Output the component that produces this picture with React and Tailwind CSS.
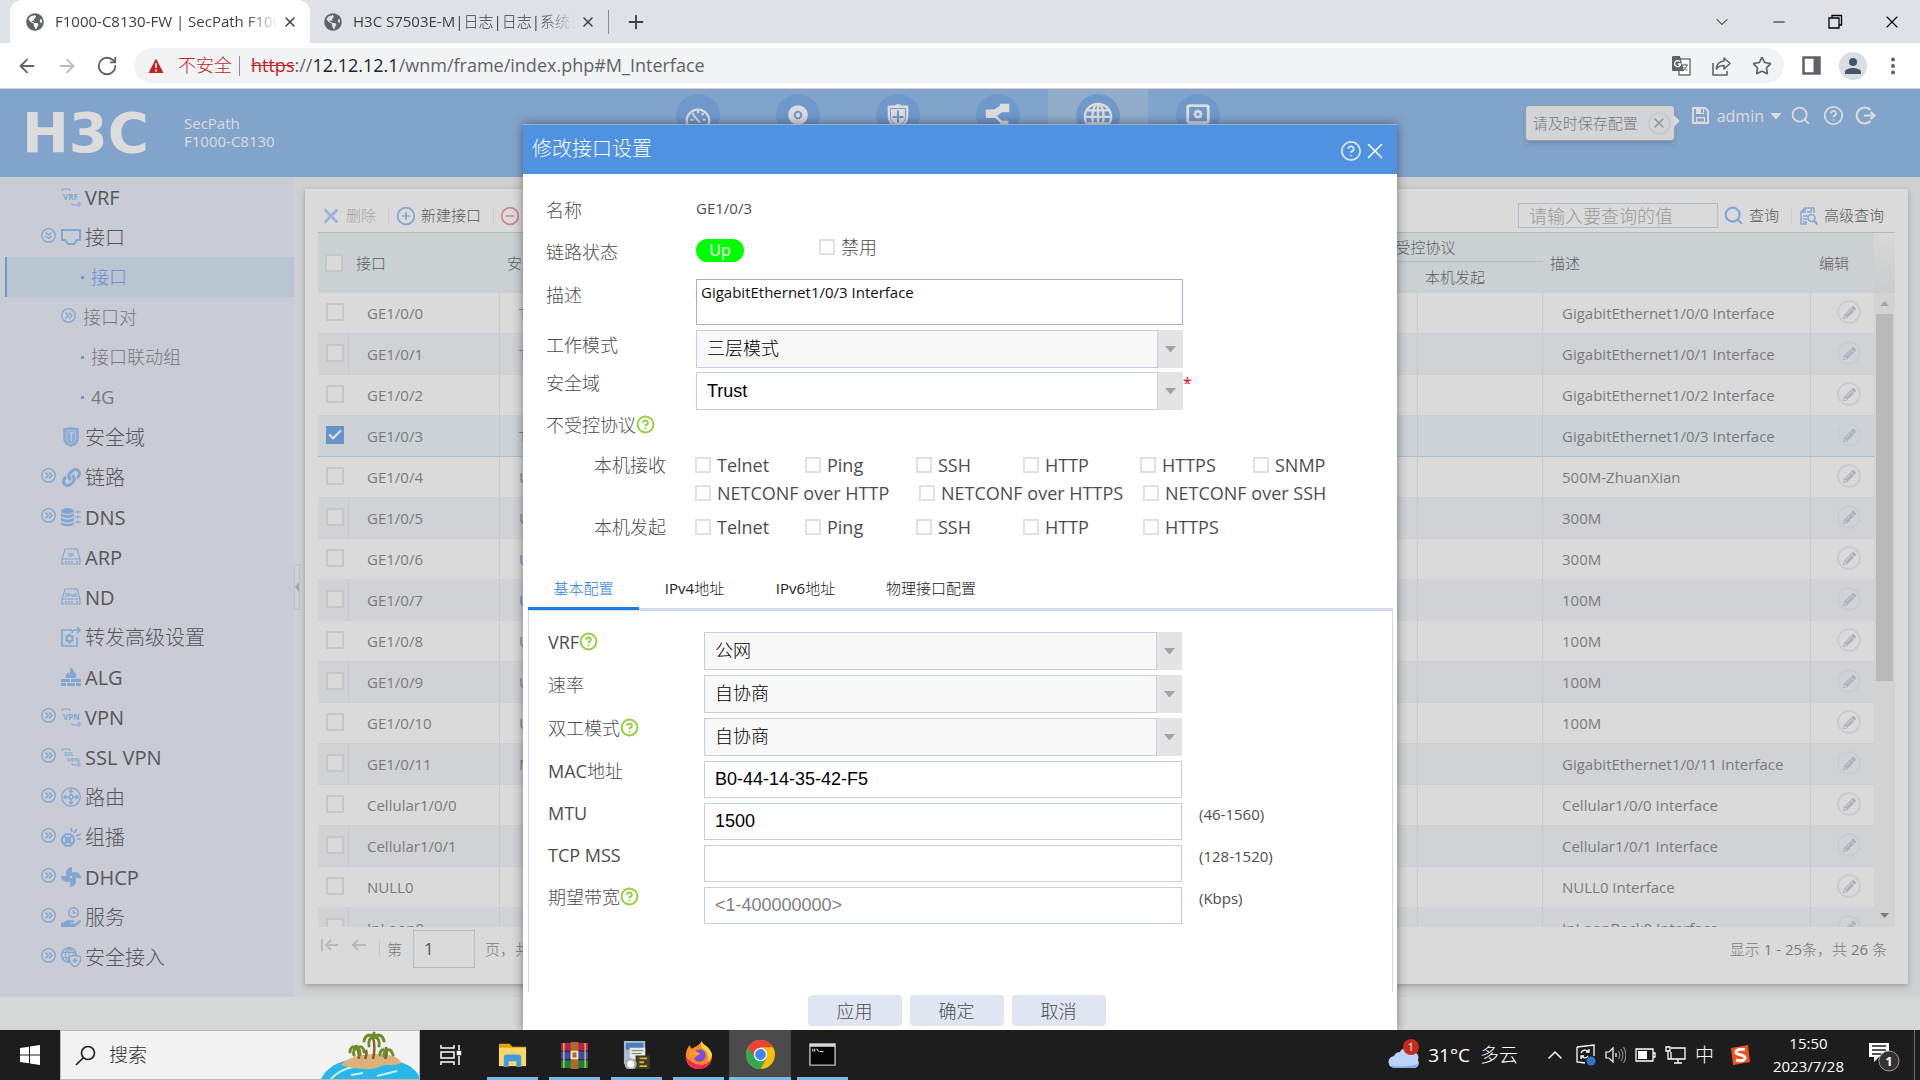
import React, { useState } from "react";
import {
  ArrowLeft,
  ArrowRight,
  Check,
  ChevronDown,
  ChevronUp,
  CircleHelp,
  CircleMinus,
  CirclePlus,
  Minus,
  Plus,
  RotateCw,
  Search,
  Star,
  X,
} from "lucide-react";
import { FaFan, FaGlobeAmericas, FaHandHolding, FaLink, FaPencilAlt } from "react-icons/fa";

const FONT = "font-['Open_Sans','Noto_Sans_CJK_SC_Light','Noto_Sans_CJK_SC',sans-serif]";

/* ---------- browser chrome ---------- */

function Tab({ title, active }) {
  return (
    <div
      className={
        active
          ? "flex h-full w-[300px] items-center rounded-t-xl bg-white pl-4 pr-3"
          : "flex h-full w-[299px] items-center border-r border-[#8a8d91] bg-transparent pl-[14px] pr-3"
      }
    >
      <FaGlobeAmericas size={18} className="shrink-0 text-[#5f6368]" />
      <span className="ml-[11px] flex-1 overflow-hidden whitespace-nowrap text-[15px] text-[#3c4043] [mask-image:linear-gradient(to_right,black_85%,transparent)]">
        {title}
      </span>
      <button type="button" aria-label="关闭标签页" className="ml-1 text-[#3c4043]">
        <X size={16} strokeWidth={2.2} />
      </button>
    </div>
  );
}

function TabStrip() {
  return (
    <div className="flex h-[43px] shrink-0 items-center bg-[#dee1e6] pl-[10px]">
      <Tab title="F1000-C8130-FW | SecPath F1000" active />
      <div className="h-6">
        <Tab title="H3C S7503E-M|日志|日志|系统日志" />
      </div>
      <button type="button" aria-label="新标签页" className="ml-4 text-[#3c4043]">
        <Plus size={22} />
      </button>
      <div className="ml-auto flex items-center gap-[38px] pr-[18px] text-black">
        <button type="button" aria-label="搜索标签页"><ChevronDown size={20} strokeWidth={1.2} /></button>
        <button type="button" aria-label="最小化"><Minus size={18} strokeWidth={1.2} /></button>
        <button type="button" aria-label="还原">
          <svg width="18" height="18" viewBox="0 0 18 18" fill="none" stroke="currentColor" strokeWidth="1.3">
            <path d="M3 5h10v10H3zM6 5V2.500h9.500V12H13" />
          </svg>
        </button>
        <button type="button" aria-label="关闭"><X size={20} strokeWidth={1.3} /></button>
      </div>
    </div>
  );
}

function TranslateIcon() {
  return (
    <svg width="20" height="22" viewBox="0 0 20 22">
      <rect x="8" y="4" width="11" height="16" fill="#fff" stroke="#5f6368" strokeWidth="1.300" />
      <path d="M11 10h6M14 8.500V10M16 10c-.5 2.500-2.500 4.500-4.500 6M12.500 12l4 4" stroke="#5f6368" fill="none" />
      <path d="M2 1h7l4 15H2a1 1 0 0 1-1-1V2a1 1 0 0 1 1-1z" fill="#5f6368" />
      <path d="M9 6.800a3 3 0 1 0 .6 2.200H7" fill="none" stroke="#fff" strokeWidth="1.400" />
    </svg>
  );
}

function AddressBar() {
  return (
    <div className="flex h-[46px] shrink-0 items-center border-b border-[#d0d1d3] bg-white pl-4 pr-5 text-[#5f6368]">
      <button type="button" aria-label="后退"><ArrowLeft size={22} /></button>
      <button type="button" aria-label="前进" className="ml-[18px] text-[#babcbe]"><ArrowRight size={22} /></button>
      <button type="button" aria-label="刷新" className="ml-[18px]"><RotateCw size={22} /></button>
      <div className="ml-4 flex h-[35px] flex-1 items-center rounded-full bg-[#f1f3f4] pl-3 pr-3 text-[18px]">
        <svg width="20" height="18" viewBox="0 0 20 18">
          <path d="M10 1.500 17.500 16h-15z" fill="#c5221f" />
          <path d="M10 6v5M10 12.500v2" stroke="#fff" strokeWidth="1.600" />
        </svg>
        <span className="ml-3 text-[#c5221f]">不安全</span>
        <span className="mx-[7px] h-5 w-px bg-[#8d9094]" />
        <span className="ml-1">
          <span className="text-[#c5221f] line-through">https</span>://
          <span className="text-[#202124]">12.12.12.1</span>/wnm/frame/index.php#M_Interface
        </span>
        <div className="ml-auto flex items-center gap-5">
          <TranslateIcon />
          <svg width="21" height="20" viewBox="0 0 21 20" fill="none" stroke="currentColor" strokeWidth="1.600">
            <path d="M2 7v12h14v-4M13 2l6 5.500-6 5.500v-3.500c-3.500 0-6 1-7.500 3.500 0-4.500 3-7.500 7.500-8z" strokeLinejoin="round" />
          </svg>
          <Star size={20} />
        </div>
      </div>
      <svg className="ml-[18px]" width="19" height="19" viewBox="0 0 19 19">
        <path d="M1.500 1.500h16v16h-16z" fill="none" stroke="currentColor" strokeWidth="2.500" />
        <path d="M11.500 1h6.500v17h-6.500z" fill="currentColor" />
      </svg>
      <span className="ml-[18px] flex size-7 items-center justify-center rounded-full bg-[#dadde2] text-[#45546b]">
        <svg width="18" height="18" viewBox="0 0 18 18" fill="currentColor">
          <circle cx="9" cy="5" r="4" />
          <path d="M1 17v-2c0-3 5-4 8-4s8 1 8 4v2z" />
        </svg>
      </span>
      <svg className="ml-[23px] mr-1" width="6" height="18" viewBox="0 0 6 18" fill="currentColor">
        <circle cx="3" cy="2.500" r="2" />
        <circle cx="3" cy="9" r="2" />
        <circle cx="3" cy="15.500" r="2" />
      </svg>
    </div>
  );
}

/* ---------- page header ---------- */

const NAV = [
  {
    name: "概览",
    art: (
      <>
        <path d="M5 26a12 12 0 1 1 22 0" fill="none" stroke="currentColor" strokeWidth="2.500" />
        <path d="M8 20h3M10 13l2 2M16 10v3M22 13l-2 2M24 20h-3M11 15l7 8" stroke="currentColor" strokeWidth="2" />
      </>
    ),
  },
  {
    name: "监控",
    art: (
      <>
        <circle cx="16" cy="15" r="7.500" fill="none" stroke="currentColor" strokeWidth="6" />
        <circle cx="16" cy="15" r="2.500" fill="currentColor" />
      </>
    ),
  },
  {
    name: "策略",
    art: (
      <>
        <path d="M5 5c5 0 8 0 11-2 3 2 6 2 11 2v11c0 7-5 11-11 14C10 27 5 23 5 16z" fill="currentColor" />
        <path d="M8 8h16v9c0 5-4 8-8 10-4-2-8-5-8-10z" fill="none" stroke="#6f98cb" />
        <path d="M16 10v13M10 17h12" stroke="#6f98cb" strokeWidth="2.200" />
      </>
    ),
  },
  {
    name: "对象",
    art: <path d="M18 3h10v9h-8l-5 4 5 5h7v9H18v-7l-5-5H3v-9h9l6-4z" fill="currentColor" />,
  },
  {
    name: "网络",
    art: (
      <g fill="none" stroke="currentColor" strokeWidth="2.500">
        <circle cx="16" cy="17" r="14" />
        <ellipse cx="16" cy="17" rx="6" ry="14" />
        <path d="M16 3v28M2 17h28M5 10h22M5 24h22" />
      </g>
    ),
  },
  {
    name: "系统",
    art: (
      <>
        <rect x="5" y="5" width="22" height="18" rx="2" fill="none" stroke="currentColor" strokeWidth="3" />
        <circle cx="16" cy="14" r="3" fill="none" stroke="currentColor" strokeWidth="2.500" />
        <path d="M16 9v2M16 17v2M11 14h2M19 14h2M12.500 10.500l1.500 1.500M19.500 10.500L18 12M12.500 17.500l1.500-1.500M19.500 17.500L18 16" stroke="currentColor" strokeWidth="1.500" />
        <path d="M14 23h4v4h4v2H10v-2h4z" fill="currentColor" />
      </>
    ),
  },
];

function Header() {
  return (
    <header className="relative flex h-[88px] shrink-0 items-start justify-center bg-[#82a4cb] text-[#dcdcdc]">
      <div className="absolute left-[22px] top-[16px] flex items-center">
        <span className="font-['DejaVu_Sans',sans-serif] text-[56px] font-bold leading-[56px]">H3C</span>
      </div>
      <div className="absolute left-[184px] top-[25px] text-[15px] leading-[18px]">
        SecPath
        <br />
        F1000-C8130
      </div>
      <nav className="flex h-full pr-6">
        {NAV.map((n) => (
          <a
            key={n.name}
            href="#M_Interface"
            aria-label={n.name}
            className={n.name === "网络" ? "flex w-[100px] justify-center bg-[#91adca] pt-[5px]" : "flex w-[100px] justify-center pt-[5px]"}
          >
            <span className="flex size-11 justify-center rounded-full bg-[#6f98cb] pt-[7px]">
              <svg width="30" height="30" viewBox="0 0 32 32">{n.art}</svg>
            </span>
          </a>
        ))}
      </nav>
      <div className="absolute right-11 top-4 flex items-start">
        <div className="relative flex h-9 items-center rounded-sm border border-[#9b9c9e] bg-[#d3d4d7] pl-[7px] pr-[3px] text-[15px] text-[#77787b] shadow-md">
          请及时保存配置
          <button type="button" aria-label="关闭提示" className="ml-[10px] flex size-[23px] items-center justify-center rounded-full border-2 border-[#c8c9cd] text-[#8f9092]">
            <X size={16} />
          </button>
          <span className="absolute -right-[6px] top-[9px] h-3 w-[6px] bg-[#dcdcdc] [clip-path:polygon(0_0,100%_50%,0_100%)]" />
        </div>
        <svg className="ml-[17px] mt-[2px]" width="17" height="17" viewBox="0 0 17 17">
          <path d="M1 1h12l3 3v12H1z" fill="none" stroke="currentColor" strokeWidth="2" />
          <path d="M4 1h8v6H4zM4 10h9v6H4z" fill="currentColor" />
          <path d="M9 2h2v4H9zM5 11.500h7v3H5z" fill="#82a4cb" />
        </svg>
        <button type="button" className="ml-2 flex items-center text-[16px] leading-[22px]">
          admin
          <span className="ml-[6px] h-[7px] w-3 bg-current [clip-path:polygon(0_0,100%_0,50%_100%)]" />
        </button>
        <Search size={21} className="ml-2" />
        <CircleHelp size={21} className="ml-3" />
        <svg className="ml-[11px]" width="21" height="21" viewBox="0 0 21 21" fill="none" stroke="currentColor" strokeWidth="2.200">
          <path d="M15.500 5a8 8 0 1 0 0 11M9 10.500h10M15.500 7l4 3.500-4 3.500" />
        </svg>
      </div>
    </header>
  );
}

/* ---------- side menu ---------- */

function Glyph({ children }) {
  return (
    <svg width="20" height="20" viewBox="0 0 20 20" fill="none" stroke="currentColor" strokeWidth="1.500">
      {children}
    </svg>
  );
}

function TextGlyph({ lines }) {
  return (
    <Glyph>
      <path d="M1 4V2h3M4 2h5v2M11 16v2h5M17 16h2v3h-2z" strokeWidth="1" />
      {lines.map((t, i) => (
        <text
          key={t}
          x={lines.length > 1 ? 3 + i * 3 : 2}
          y={lines.length > 1 ? 9 + i * 6 : 13}
          fontSize={lines.length > 1 ? 6 : 8}
          fontWeight="bold"
          fill="currentColor"
          stroke="none"
        >
          {t}
        </text>
      ))}
    </Glyph>
  );
}

function DriveGlyph({ label }) {
  return (
    <Glyph>
      <path d="M4 2h12l3 10v5H1v-5zM1 12h18" strokeWidth="1.200" />
      <path d="M4 15h2M7 15h2M10 15h2M15 15h2" />
      <text x="10" y="9.500" fontSize="6" textAnchor="middle" fontWeight="bold" fill="currentColor" stroke="none">{label}</text>
    </Glyph>
  );
}

const ICONS = {
  vrf: <TextGlyph lines={["VRF"]} />,
  vpn: <TextGlyph lines={["VPN"]} />,
  ssl: <TextGlyph lines={["SSL", "VPN"]} />,
  port: <Glyph><path d="M1 3h18v10h-3l-3 4H7l-3-4H1z" strokeWidth="2" /></Glyph>,
  zone: (
    <Glyph>
      <path d="M3 2l7-1 7 1v10c0 4-4 6-7 7-3-1-7-3-7-7z" fill="currentColor" fillOpacity=".8" />
      <path d="M5.500 4h9v8c0 2-2 4-4.500 5-2.500-1-4.500-3-4.500-5z" stroke="#a9bcd6" strokeWidth="1" />
      <path d="M8 6h5M10.500 6v8" stroke="#c9ccd5" strokeWidth="1" />
    </Glyph>
  ),
  link: <FaLink size={19} />,
  dns: (
    <Glyph>
      <g fill="currentColor" stroke="none">
        <ellipse cx="6.500" cy="4" rx="6.500" ry="3" />
        <path d="M0 6c2 2.500 11 2.500 13 0v3c-2 2.500-11 2.500-13 0zM0 10.500c2 2.500 11 2.500 13 0v3c-2 2.500-11 2.500-13 0zM0 15c2 2.500 11 2.500 13 0v2c-2 3-11 3-13 0z" />
      </g>
      <path d="M14 5h6M14 10h6M14 15h6M17 3.500v3M17 8.500v3M17 13.500v3" strokeWidth="1.200" />
    </Glyph>
  ),
  arp: <DriveGlyph label="IP" />,
  nd: <DriveGlyph label="IPv6" />,
  fwd: (
    <Glyph>
      <path d="M11 3H1v16h15v-9M11 6c0-2 1-3 3-3h5M16 0l3 3-3 3" strokeWidth="1.700" />
      <circle cx="8.500" cy="11.500" r="3" strokeWidth="2" />
      <path d="M8.500 6.500v2M8.500 14.500v2M4.500 9l2 1M10.500 13l2 1M4.500 14l2-1M10.500 10l2-1" strokeWidth="1.600" />
    </Glyph>
  ),
  alg: (
    <Glyph>
      <path d="M0 12h9v3H0zM10 12h10v3H10zM0 16h5v3H0zM6 16h8v3H6zM15 16h5v3h-5zM5 11c-1-3 1-4 2-6l1 2c1-2 2-4 1-7 4 2 4 5 4 6l1-1c2 3 1 5 0 6z" fill="currentColor" stroke="none" />
    </Glyph>
  ),
  route: (
    <Glyph>
      <circle cx="10" cy="10" r="9.200" strokeWidth="1.300" />
      <circle cx="10" cy="10" r="2" />
      <path d="M10 8V3M8 5l2-2 2 2M10 12v5M8 15l2 2 2-2M8 10H3M5 8l-2 2 2 2M12 10h5M15 8l2 2-2 2" strokeWidth="1.300" />
    </Glyph>
  ),
  multi: (
    <Glyph>
      <circle cx="7" cy="13" r="6" strokeWidth="2" />
      <circle cx="7" cy="13" r="2.500" />
      <path d="M3 9l8 8M11 9l-8 8M10 1l1 4M16 2l-3 4M15 9l5-2M16 12h4" strokeWidth="1.700" />
    </Glyph>
  ),
  fan: <FaFan size={20} />,
  serve: (
    <span className="relative block size-5">
      <FaHandHolding size={20} className="absolute -bottom-px" />
      <svg className="absolute right-[2px] top-0" width="11" height="11" viewBox="0 0 11 11" fill="#c9ccd5" stroke="currentColor" strokeWidth="1.500">
        <circle cx="5.500" cy="5.500" r="4.700" />
        <path d="M5.500 3v3H8" />
      </svg>
    </span>
  ),
  secure: (
    <Glyph>
      <circle cx="8" cy="8" r="7.300" />
      <path d="M8 1v15M1 5.500h14M1 10.500h14M8 1c-5 4-5 10 0 14M8 1c3 2 4 4 4 6" strokeWidth="1.100" />
      <path d="M8 10l6-2 6 2c0 5-2 8-6 10-4-2-6-5-6-10z" fill="#c9ccd5" />
      <path d="M14 11v5M11.500 13.500h5" />
    </Glyph>
  ),
};

const MENU = [
  { text: "VRF", icon: "vrf" },
  { text: "接口", icon: "port", fold: "open" },
  { text: "接口", level: 2, current: true },
  { text: "接口对", level: 2, fold: "closed" },
  { text: "接口联动组", level: 2 },
  { text: "4G", level: 2 },
  { text: "安全域", icon: "zone" },
  { text: "链路", icon: "link", fold: "closed" },
  { text: "DNS", icon: "dns", fold: "closed" },
  { text: "ARP", icon: "arp" },
  { text: "ND", icon: "nd" },
  { text: "转发高级设置", icon: "fwd" },
  { text: "ALG", icon: "alg" },
  { text: "VPN", icon: "vpn", fold: "closed" },
  { text: "SSL VPN", icon: "ssl", fold: "closed" },
  { text: "路由", icon: "route", fold: "closed" },
  { text: "组播", icon: "multi", fold: "closed" },
  { text: "DHCP", icon: "fan", fold: "closed" },
  { text: "服务", icon: "serve", fold: "closed" },
  { text: "安全接入", icon: "secure", fold: "closed" },
];

function FoldMark({ open }) {
  return (
    <svg className="mb-1" width="15" height="15" viewBox="0 0 15 15" fill="none" stroke="currentColor" strokeWidth="1.300">
      <circle cx="7.500" cy="7.500" r="6.800" />
      {open ? <path d="M4.500 4.500l3 2.500 3-2.500M4.500 8l3 2.500 3-2.500" /> : <path d="M4.500 4.500l3 3-3 3M8 4.500l3 3-3 3" />}
    </svg>
  );
}

function Sidebar() {
  return (
    <nav className="w-[294px] shrink-0 bg-[#c9ccd5] pl-[5px] text-[#82a6d2]">
      {MENU.map((m, i) =>
        m.level === 2 ? (
          <a
            key={i}
            href="#M_Interface"
            className={
              m.current
                ? "flex h-10 items-center border-l-2 border-[#6f98cb] bg-[#bac5d2] pl-[54px]"
                : "flex h-10 items-center pl-[56px]"
            }
          >
            {m.fold ? <FoldMark /> : <span className="ml-5 size-[3px] bg-[#6f98cb]" />}
            <span
              className={
                m.current
                  ? "ml-[7px] pt-px text-[18px] text-[#6b8dd0]"
                  : "ml-[7px] pt-px text-[18px] text-[#77787c]"
              }
            >
              {m.text}
            </span>
          </a>
        ) : (
          <a key={i} href="#M_Interface" className="flex h-10 items-center pl-9">
            <span className="w-5">{m.fold && <FoldMark open={m.fold === "open"} />}</span>
            <span className="flex size-5 items-center justify-center">{ICONS[m.icon]}</span>
            <span className="ml-1 pt-[2px] text-[20px] text-[#56575b]">{m.text}</span>
          </a>
        )
      )}
    </nav>
  );
}

/* ---------- interface list ---------- */

const ROWS = [
  ["GE1/0/0", "Trust", "GigabitEthernet1/0/0 Interface"],
  ["GE1/0/1", "Trust", "GigabitEthernet1/0/1 Interface"],
  ["GE1/0/2", "", "GigabitEthernet1/0/2 Interface"],
  ["GE1/0/3", "Trust", "GigabitEthernet1/0/3 Interface"],
  ["GE1/0/4", "Untrust", "500M-ZhuanXian"],
  ["GE1/0/5", "Untrust", "300M"],
  ["GE1/0/6", "Untrust", "300M"],
  ["GE1/0/7", "Untrust", "100M"],
  ["GE1/0/8", "Untrust", "100M"],
  ["GE1/0/9", "Untrust", "100M"],
  ["GE1/0/10", "Untrust", "100M"],
  ["GE1/0/11", "Management", "GigabitEthernet1/0/11 Interface"],
  ["Cellular1/0/0", "", "Cellular1/0/0 Interface"],
  ["Cellular1/0/1", "", "Cellular1/0/1 Interface"],
  ["NULL0", "", "NULL0 Interface"],
  ["InLoop0", "", "InLoopBack0 Interface"],
];

function RowCheck({ label, ...props }) {
  return (
    <span className="relative block size-[18px]">
      <input
        type="checkbox"
        aria-label={label}
        className="peer block size-[18px] appearance-none border-2 border-[#c6c6c6] bg-[#dadada] checked:border-[#6594cb] checked:bg-[#6594cb]"
        {...props}
      />
      <Check size={16} strokeWidth={3.5} className="pointer-events-none absolute left-px top-px hidden text-[#dcdcdc] peer-checked:block" />
    </span>
  );
}

function InterfaceTable() {
  const th = "pl-[7px] text-left font-normal";
  return (
    <table className="w-full table-fixed border-separate border-spacing-0 text-[15px] text-[#7a7a7a]">
      <colgroup>
        <col className="w-[31px]" />
        <col className="w-[151px]" />
        <col />
        <col className="w-[125px]" />
        <col className="w-[125px]" />
        <col className="w-[268px]" />
        <col className="w-[63px]" />
      </colgroup>
      <thead className="bg-[#cbd0d3] text-[#5f6062]">
        <tr className="h-[29px]">
          <th rowSpan={2} className="pl-[7px]"><RowCheck label="全选" /></th>
          <th rowSpan={2} className={th}>接口</th>
          <th rowSpan={2} className={th}>安全域</th>
          <th colSpan={2} className="border-b border-[#b9bec1] font-normal">不受控协议</th>
          <th rowSpan={2} className={th}>描述</th>
          <th rowSpan={2} className="pl-2 text-left font-normal">编辑</th>
        </tr>
        <tr className="h-[31px]">
          <th className={th}>本机接收</th>
          <th className={th}>本机发起</th>
        </tr>
      </thead>
      <tbody>
        {ROWS.map(([name, zone, desc], i) => {
          const on = name === "GE1/0/3";
          const edge = on ? "border-b border-[#a9c1d2]" : "border-b border-[#cfd0d3]";
          const line = on ? "border-b border-r border-b-[#a9c1d2] border-r-[#c4c8cb]" : "border-b border-r border-b-[#cfd0d3] border-r-[#c9c9cb]";
          return (
            <tr key={name} className={on ? "h-[41px] bg-[#ccd2d6]" : i % 2 ? "h-[41px] bg-[#d1d2d6]" : "h-[41px] bg-[#dadada]"}>
              <td className={(i % 2 && !on ? line : edge) + " pb-[3px] pl-2"}><RowCheck label={name} defaultChecked={on} /></td>
              <td className={line + " pl-[18px]"}>{name}</td>
              <td className={line + " pl-[19px]"}><a href="#zone" className="text-[#7f88bd]">{zone}</a></td>
              <td className={line} />
              <td className={line} />
              <td className={line + " whitespace-nowrap pl-[19px]"}>{desc}</td>
              <td className={edge + " pb-[2px] pl-[26px]"}>
                <button type="button" aria-label={"编辑 " + name} className="flex size-6 items-center justify-center rounded-full border-2 border-[#cbccd0] text-[#aeb0bd]">
                  <FaPencilAlt size={13} />
                </button>
              </td>
            </tr>
          );
        })}
      </tbody>
    </table>
  );
}

function ListPanel() {
  return (
    <section className="flex min-h-0 flex-1 flex-col bg-[#dadada] px-[13px] shadow-[0_2px_6px_rgba(0,0,0,0.25)]">
      <div className="flex h-11 shrink-0 items-center border-b border-[#b7b8b9] pt-[10px] text-[15px] text-[#5a5a5a]">
        <button type="button" className="flex items-center pl-[2px] text-[#a2a3a5]">
          <X size={22} strokeWidth={3} className="text-[#9db5d4]" />
          <span className="ml-1">删除</span>
        </button>
        <span className="ml-3 h-4 w-px bg-[#cccccc]" />
        <button type="button" className="ml-[7px] flex items-center">
          <CirclePlus size={20} className="text-[#82a6d2]" />
          <span className="ml-[5px]">新建接口</span>
        </button>
        <span className="ml-3 h-4 w-px bg-[#cccccc]" />
        <button type="button" aria-label="删除接口" className="ml-[6px]">
          <CircleMinus size={20} className="text-[#d58485]" />
        </button>
        <input
          type="search"
          aria-label="查询"
          placeholder="请输入要查询的值"
          className="ml-auto h-[25px] w-[200px] border border-[#b3bccb] bg-transparent pl-[10px] text-[18px] leading-[22px] outline-none placeholder:text-[#999a9c]"
        />
        <button type="button" className="ml-[5px] flex items-center">
          <Search size={21} strokeWidth={2.4} className="text-[#82a6d2]" />
          <span className="ml-[5px]">查询</span>
        </button>
        <span className="ml-3 h-4 w-px bg-[#cccccc]" />
        <button type="button" className="mr-[11px] ml-2 flex items-center">
          <svg width="18" height="18" viewBox="0 0 18 18" fill="none" stroke="#82a6d2" strokeWidth="1.500">
            <path d="M14 6V1H5L1 5v12h6" />
            <path d="M5 1v4H1M3 9h5M3 12h4M3 15h4M7 5h5M10 3h2" />
            <circle cx="11.500" cy="11" r="3.500" />
            <path d="M14 13.500l3.500 4" strokeWidth="2" />
          </svg>
          <span className="ml-[6px]">高级查询</span>
        </button>
      </div>
      <div className="flex min-h-0 flex-1">
        <div className="min-w-0 flex-1 overflow-hidden">
          <InterfaceTable />
        </div>
        <div className="flex w-[21px] shrink-0 flex-col items-center bg-[#d2d2d2]">
          <div className="h-[60px] w-full shrink-0 bg-linear-to-b from-[#d8d8d8] to-[#cacbcc]" />
          <span className="my-2 h-[5px] w-[9px] shrink-0 bg-[#a3a3a3] [clip-path:polygon(50%_0,100%_100%,0_100%)]" />
          <div className="h-[367px] w-[17px] bg-[#b9b9b9]" />
          <span className="mb-[9px] mt-auto h-[5px] w-[9px] shrink-0 bg-[#7c7c7c] [clip-path:polygon(0_0,100%_0,50%_100%)]" />
        </div>
      </div>
      <div className="flex h-[57px] shrink-0 items-start pt-[3px] text-[15px] leading-[38px] text-[#7a7a7a]">
        <svg className="ml-[3px] mt-2" width="18" height="14" viewBox="0 0 18 14" fill="none" stroke="#b7b8ba" strokeWidth="2">
          <path d="M1 1v12M17 7H5M10 2L5 7l5 5" />
        </svg>
        <svg className="ml-3 mt-2" width="16" height="14" viewBox="0 0 16 14" fill="none" stroke="#b7b8ba" strokeWidth="2">
          <path d="M15 7H2M7 2L2 7l5 5" />
        </svg>
        <span className="ml-3 mr-[7px] mt-[11px] h-4 w-px bg-[#c6c6c6]" />
        <label htmlFor="page">第</label>
        <input id="page" defaultValue="1" className="ml-[11px] mr-[10px] h-[38px] w-[62px] border border-[#b4bcc6] bg-transparent pl-[10px] text-[17px] text-[#555555] outline-none" />
        <span>页，共 2 页</span>
        <span className="ml-auto mr-2">显示 1 - 25条，共 26 条</span>
      </div>
    </section>
  );
}

/* ---------- dialog ---------- */

function Help() {
  return (
    <button type="button" aria-label="帮助" className="inline-flex align-top text-[#92d13e]">
      <CircleHelp size={19} strokeWidth={2.5} />
    </button>
  );
}

function Field({ label, id, help, hint, required, pad, children }) {
  return (
    <div className="flex items-start">
      <div className={"shrink-0 leading-5 text-[#4d4d4d] " + (pad || "w-[156px]")}>
        <label htmlFor={id} className="text-[18px]">{label}</label>
        {help && <Help />}
      </div>
      {children}
      {required && <span className="pt-px text-[16px] leading-5 text-red-600">*</span>}
      {hint && <span className="ml-[17px] pt-px text-[15px] leading-5 text-[#4d4d4d]">{hint}</span>}
    </div>
  );
}

const CONTROL = "block w-full border border-[#c3cde4] outline-none text-black text-[18px] font-['Liberation_Sans','Noto_Sans_CJK_SC_Light','Noto_Sans_CJK_SC',sans-serif]";

function Select({ id, value, plain, width }) {
  return (
    <div className={"relative " + width}>
      <select
        id={id}
        defaultValue={value}
        className={CONTROL + " h-[38px] appearance-none pl-[10px] pr-8 pt-px " + (plain ? "bg-white" : "bg-[#f8f8f8]")}
      >
        <option>{value}</option>
      </select>
      <span className="pointer-events-none absolute inset-y-0 right-0 flex w-[26px] items-center justify-center border-l border-[#c3cde4] bg-[#e4e4e4]">
        <span className="h-[7px] w-3 bg-[#a3a3a3] [clip-path:polygon(0_0,100%_0,50%_100%)]" />
      </span>
    </div>
  );
}

function TextInput({ id, ...props }) {
  return (
    <div className="w-[478px]">
      <input id={id} className={CONTROL + " h-[37px] bg-white pl-[10px] placeholder:text-[#808080]"} {...props} />
    </div>
  );
}

function Tick({ label }) {
  return (
    <label className="flex items-center gap-[6px] whitespace-nowrap text-[18px] leading-5 text-[#4d4d4d]">
      <input type="checkbox" className="size-4 appearance-none border-2 border-[#e2e2e2] bg-white checked:bg-[#4f92e1]" />
      {label}
    </label>
  );
}

const TABS = ["基本配置", "IPv4地址", "IPv6地址", "物理接口配置"];

function Dialog() {
  const [tab, setTab] = useState(TABS[0]);

  return (
    <div
      role="dialog"
      aria-labelledby="dlg-title"
      className="absolute bottom-0 left-1/2 top-[35px] flex w-[874px] -translate-x-1/2 flex-col border-t border-[#9fb0c6] bg-white shadow-[0_0_10px_rgba(0,0,0,0.45)]"
    >
      <div className="flex h-[49px] shrink-0 items-center bg-[#4f92e1] pl-[9px] pr-[9px] text-white">
        <h2 id="dlg-title" className="pb-[2px] text-[20px]">修改接口设置</h2>
        <button type="button" aria-label="帮助" className="ml-auto pt-[2px]"><CircleHelp size={22} strokeWidth={1.9} className="text-[#dbe8f8]" /></button>
        <button type="button" aria-label="关闭" className="pt-[2px]"><X size={26} strokeWidth={1.5} /></button>
      </div>

      <div className="px-[23px] pt-6">
        <div className="flex h-[41px] items-start text-[#4d4d4d]">
          <span className="w-[150px] pt-[2px] text-[18px] leading-5">名称</span>
          <span className="text-[15px] leading-5">GE1/0/3</span>
        </div>
        <div className="flex h-10 items-start text-[#4d4d4d]">
          <span className="w-[150px] pt-[3px] text-[18px] leading-5">链路状态</span>
          <span className="h-[23px] w-12 rounded-full bg-[#00ff00] text-center text-[16px] leading-[23px] text-white">Up</span>
          <div className="-mt-[2px] ml-[75px]"><Tick label="禁用" /></div>
        </div>
        <div className="h-[51px]">
          <Field label="描述" id="desc" pad="w-[150px] pt-[6px]">
            <textarea
              id="desc"
              defaultValue="GigabitEthernet1/0/3 Interface"
              className="h-[46px] w-[487px] resize-none border border-[#a9adc0] bg-white pl-1 pt-[2px] text-[15px] leading-5 text-[#111111] outline-none"
            />
          </Field>
        </div>
        <div className="h-[42px]">
          <Field label="工作模式" id="mode" pad="w-[150px] pt-[5px]">
            <Select id="mode" value="三层模式" width="w-[487px]" />
          </Field>
        </div>
        <Field label="安全域" id="zone" pad="w-[150px] pt-px" required>
          <Select id="zone" value="Trust" plain width="w-[487px]" />
        </Field>
        <div className="mt-[5px] text-[18px] leading-5 text-[#4d4d4d]">
          不受控协议
          <Help />
        </div>
        <div className="mt-5 flex text-[18px] leading-5 text-[#4d4d4d]">
          <span className="w-[149px] shrink-0 pl-12">本机接收</span>
          <div>
            <div className="grid grid-cols-[110px_111px_107px_117px_113px_auto]">
              {["Telnet", "Ping", "SSH", "HTTP", "HTTPS", "SNMP"].map((p) => <Tick key={p} label={p} />)}
            </div>
            <div className="mt-2 grid grid-cols-[224px_224px_auto]">
              {["NETCONF over HTTP", "NETCONF over HTTPS", "NETCONF over SSH"].map((p) => <Tick key={p} label={p} />)}
            </div>
          </div>
        </div>
        <div className="mt-[14px] flex text-[18px] leading-5 text-[#4d4d4d]">
          <span className="w-[149px] shrink-0 pl-12">本机发起</span>
          <div className="grid grid-cols-[110px_111px_107px_120px_auto]">
            {["Telnet", "Ping", "SSH", "HTTP", "HTTPS"].map((p) => <Tick key={p} label={p} />)}
          </div>
        </div>
      </div>

      <div className="ml-[5px] mr-1 mt-8 flex min-h-0 flex-1 flex-col">
        <div role="tablist" className="flex h-[42px] shrink-0 border-b-[3px] border-[#d2d9ea]">
          {TABS.map((t) => (
            <button
              key={t}
              type="button"
              role="tab"
              aria-selected={t === tab}
              onClick={() => setTab(t)}
              className={
                t === tab
                  ? "h-[41px] min-w-[111px] border-b-[3px] border-[#1c7ce0] px-[25px] text-[15px] leading-9 text-[#2a80dd]"
                  : "h-[41px] min-w-[111px] border-b-[3px] border-transparent px-[25px] text-[15px] leading-9 text-[#222222]"
              }
            >
              {t}
            </button>
          ))}
        </div>
        <div className="flex-1 border-x border-[#cfd7ea] pl-[19px] pt-[21px]">
          <div className="flex flex-col gap-[5px]">
            <Field label="VRF" id="vrf" help><Select id="vrf" value="公网" width="w-[478px]" /></Field>
            <Field label="速率" id="speed"><Select id="speed" value="自协商" width="w-[478px]" /></Field>
            <Field label="双工模式" id="duplex" help><Select id="duplex" value="自协商" width="w-[478px]" /></Field>
            <Field label="MAC地址" id="mac"><TextInput id="mac" defaultValue="B0-44-14-35-42-F5" /></Field>
            <Field label="MTU" id="mtu" hint="(46-1560)"><TextInput id="mtu" defaultValue="1500" /></Field>
            <Field label="TCP MSS" id="mss" hint="(128-1520)"><TextInput id="mss" /></Field>
            <Field label="期望带宽" id="bw" help hint="(Kbps)"><TextInput id="bw" placeholder="<1-400000000>" /></Field>
          </div>
        </div>
      </div>

      <div className="flex h-[38px] shrink-0 items-start justify-center gap-2 pr-[7px] pt-[3px]">
        {["应用", "确定", "取消"].map((b) => (
          <button key={b} type="button" className="h-[31px] w-[94px] rounded-sm bg-[#dfe5f1] text-[18px] leading-8 text-[#4d4d4d]">
            {b}
          </button>
        ))}
      </div>
    </div>
  );
}

/* ---------- desktop taskbar ---------- */

function Island() {
  return (
    <svg width="98" height="48" viewBox="0 0 98 48">
      <path d="M0 48C8 32 26 27 50 27s42 6 48 18v3z" fill="#29b6e8" />
      <path d="M10 48c8-9 20-13 34-13M56 45l20-5M30 44l12-2" stroke="#c8f1fb" strokeWidth="2" fill="none" />
      <path d="M20 34c6-7 18-11 34-11s24 3 26 9c-8 4-14 0-22 4s-26 2-38-2z" fill="#dcb27a" />
      <g stroke="#8a5a2b" strokeWidth="2.500" fill="none">
        <path d="M52 28c2-8 2-14 0-22M38 28c0-6-1-10-3-14M64 28c2-4 2-8 1-12M44 28c2-4 2-6 1-9" />
      </g>
      <g stroke="#6b8e2a" strokeWidth="3" fill="none" strokeLinecap="round">
        <path d="M53 6c-5-4-9-1-10 4M53 6c5-4 9-1 10 4M53 6c-4 0-6 4-5 9M53 6c4 0 6 4 5 9M53 6V2" />
        <path d="M36 17c-4-3-7 0-7 4M36 17c4-3 7 0 7 4M36 17c-3 0-4 4-3 7M36 17c3 0 3 4 3 7" />
        <path d="M65 20c-4-3-6 0-6 4M65 20c4-3 6 0 7 4M65 20c-2 0-2 3-2 5" />
      </g>
    </svg>
  );
}

const APPS = [
  {
    name: "文件资源管理器",
    art: (
      <>
        <path d="M1 4h11l3 3h14v20H1z" fill="#e5a50c" />
        <path d="M1 8h28v19H1z" fill="#ffd769" />
        <path d="M6 28V18c0-2 1-3 3-3h12c2 0 3 1 3 3v10h-5v-6h-8v6z" fill="#3f9ce0" />
      </>
    ),
  },
  {
    name: "WinRAR",
    art: (
      <>
        <path d="M1 3h28v8H1z" fill="#b32350" />
        <path d="M1 12h28v8H1z" fill="#3d49b5" />
        <path d="M1 21h28v8H1z" fill="#17823a" />
        <path d="M4 3v26M26 3v26" stroke="#d9b84a" strokeWidth="1.500" />
        <path d="M11 2h8v28h-8z" fill="#b0672d" />
        <path d="M12 12h6v7h-6z" fill="none" stroke="#f3e3b5" strokeWidth="2" />
      </>
    ),
  },
  {
    name: "安装程序",
    art: (
      <>
        <path d="M2 1h22v24H2z" fill="#a9bccb" />
        <path d="M4 3h18v7H4z" fill="#4a7eb9" />
        <path d="M8 8h16v12H8z" fill="#e8e8e2" />
        <path d="M10 11h12M10 14h10" stroke="#777" />
        <path d="M14 16h15v14H14z" fill="#3b3a2c" />
        <path d="M18 19h8M18 23h5M18 27h8" stroke="#d8b526" strokeWidth="2" />
        <circle cx="9" cy="25" r="5" fill="#fff" stroke="#a8adb0" strokeWidth="2.500" />
      </>
    ),
  },
  {
    name: "Firefox",
    art: (
      <>
        <path d="M18 1c1 4 9 6 11 14 1 8-5 15-14 15S1 23 2 15c0-4 2-7 4-10 0 2 1 3 2 4 3-2 8-3 10-8z" fill="#ff8a1e" />
        <path d="M18 1c1 4 9 6 11 14-1 4-2 6-4 8 1-7-1-12-7-15z" fill="#ffd83c" />
        <path d="M2 16c0 8 6 14 13 14s13-5 14-12c-3 7-10 9-16 7S3 20 2 16z" fill="#f5245b" />
        <circle cx="16" cy="16" r="6.500" fill="#7a4fe0" />
        <path d="M6 11c3-1 6 0 8 2 3 0 3 2 0 3-2 1-3 3-5 2s-4-4-3-7z" fill="#ff9b26" />
      </>
    ),
  },
  {
    name: "Chrome",
    open: true,
    art: (
      <>
        <circle cx="15" cy="15" r="15" fill="#fbbc05" />
        <path d="M2 7.500A15 15 0 0 0 15 30l6.500-11.500L15 15z" fill="#34a853" />
        <path d="M2 7.500A15 15 0 0 1 28 7.500H15v7.500H6.500z" fill="#ea4335" />
        <circle cx="15" cy="15" r="7" fill="#fff" />
        <circle cx="15" cy="15" r="5.600" fill="#4285f4" />
      </>
    ),
  },
  {
    name: "命令提示符",
    art: (
      <>
        <path d="M2 4h26v22H2z" fill="#050505" stroke="#b9b9b9" strokeWidth="1.500" />
        <path d="M2 4h26v3H2z" fill="#d8d8d8" />
        <path d="M5 9v3M7 9v3M9 9l2 3M12 12h4" stroke="#fff" />
      </>
    ),
  },
];

function Taskbar() {
  return (
    <footer className="flex h-[50px] shrink-0 items-center bg-[#1d1d1d] text-white">
      <button type="button" aria-label="开始" className="flex w-[60px] justify-center">
        <svg width="20" height="20" viewBox="0 0 20 20" fill="#fff">
          <path d="M0 3l9-1.300V9.500H0zM10 1.500L20 0v9.500H10zM0 10.500h9v7.800L0 17zM10 10.500h10V20l-10-1.500z" />
        </svg>
      </button>
      <label className="flex h-full w-[360px] items-center border border-[#b9b9b9] bg-[#f2f2f2] pl-[14px] text-[#222222]">
        <svg width="21" height="21" viewBox="0 0 21 21" fill="none" stroke="currentColor" strokeWidth="1.700">
          <circle cx="13" cy="8" r="6.500" />
          <path d="M8.500 12.500L1 20" />
        </svg>
        <input aria-label="搜索" placeholder="搜索" className="ml-[13px] w-[130px] bg-transparent text-[19px] outline-none placeholder:text-[#333333]" />
        <span className="ml-auto self-end"><Island /></span>
      </label>
      <button type="button" aria-label="任务视图" className="flex w-[61px] justify-center">
        <svg width="22" height="20" viewBox="0 0 22 20" fill="none" stroke="#fff" strokeWidth="1.500">
          <path d="M1 0v3h13V0M1 7h13v6H1zM1 20v-3h13v3M19 0v5M19 11v9" />
          <path d="M17.500 6.500h3v3h-3z" fill="#fff" />
        </svg>
      </button>
      <div className="flex h-full">
        {APPS.map((a) => (
          <button
            key={a.name}
            type="button"
            aria-label={a.name}
            className={
              a.open
                ? "flex h-full w-[62px] flex-col items-center justify-between bg-[#4b4b4b] pt-[10px]"
                : "flex h-full w-[62px] flex-col items-center justify-between pt-[10px]"
            }
          >
            <svg width="29" height="29" viewBox="0 0 30 30">{a.art}</svg>
            <span className={a.open ? "h-[3px] w-full bg-[#76b9ed]" : "h-[3px] w-[51px] bg-[#76b9ed]"} />
          </button>
        ))}
      </div>

      <div className="ml-auto flex items-center pr-[5px]">
        <svg width="32" height="34" viewBox="0 0 32 34">
          <path d="M7 30a6 6 0 0 1-1-12 7 7 0 0 1 6-4c1-4 9-6 13 0 6 1 6 5 5 8 2 4 0 8-4 8z" fill="#bcd3f7" />
          <path d="M3 27c3 2 20 2 27-1-1 3-3 4-5 4H7c-2 0-3-1-4-3z" fill="#87aaf0" />
          <circle cx="23" cy="9" r="8" fill="#c42b1c" />
          <text x="23" y="13" fontSize="11" textAnchor="middle" fill="#fff">1</text>
        </svg>
        <span className="ml-2 text-[19px]">31°C&nbsp; 多云</span>
        <ChevronUp size={24} strokeWidth={1.5} className="ml-[25px]" />
        <svg className="ml-2" width="21" height="22" viewBox="0 0 21 22" fill="none" stroke="#fff" strokeWidth="1.300">
          <path d="M2 3l17-2v11M2 3v15l8 1M6 9c1-3 5-4 8-1M14 5v3h-3M13 12c-2 3-5 2-7 0M6 15v-3h3" />
          <circle cx="16" cy="17" r="4.500" fill="#2f76c7" stroke="none" />
        </svg>
        <svg className="ml-[9px]" width="21" height="18" viewBox="0 0 21 18" fill="none" stroke="#fff" strokeWidth="1.200">
          <path d="M1 6h3l4-4v14l-4-4H1zM11 7v4" />
          <path d="M13.500 5c1.500 2.500 1.500 5.500 0 8M16 3c2.500 4 2.500 8 0 12M18.500 1c3 5 3 11 0 16" stroke="#888" />
        </svg>
        <svg className="ml-[9px]" width="21" height="14" viewBox="0 0 21 14">
          <path d="M1 1h17v12H1zM18 5h2v4h-2" fill="none" stroke="#fff" strokeWidth="1.300" />
          <path d="M3 3h9v8H3z" fill="#fff" />
        </svg>
        <svg className="ml-[9px]" width="21" height="18" viewBox="0 0 21 18" fill="none" stroke="#fff" strokeWidth="1.300">
          <path d="M6 2h14v11H6V6M9 17h8M13 13v4M1 1h4v4H1zM3 5v8h3" />
        </svg>
        <span className="ml-[9px] text-[19px]">中</span>
        <svg className="ml-4" width="21" height="22" viewBox="0 0 21 22">
          <path d="M1 4l17-3 2 17-17 3z" fill="#f0501e" />
          <path d="M15 5.500C9 4.500 6 6 6 8.500s9 2 9 5-4 4-9 2.500" fill="none" stroke="#fff" strokeWidth="3" />
        </svg>
        <div className="ml-[22px] text-center text-[15px] leading-[23px]">
          15:50
          <br />
          2023/7/28
        </div>
        <button type="button" aria-label="通知" className="ml-6">
          <svg width="32" height="34" viewBox="0 0 32 34">
            <path d="M1 5h20v14H11l-5 5v-5H1z" fill="#fff" />
            <path d="M4 8h14M4 12h14M4 16h9" stroke="#1d1d1d" strokeWidth="1.500" />
            <circle cx="21" cy="23" r="10" fill="#333" stroke="#999" />
            <text x="21" y="28" fontSize="13" fontWeight="bold" textAnchor="middle" fill="#fff">1</text>
          </svg>
        </button>
        <span className="ml-[14px] h-[50px] w-px bg-[#6b6b6b]" />
      </div>
    </footer>
  );
}

export default function App() {
  return (
    <div className={FONT + " flex h-screen flex-col overflow-hidden"}>
      <TabStrip />
      <AddressBar />
      <main className="relative flex min-h-0 flex-1 flex-col overflow-hidden bg-[#d6d8d7]">
        <Header />
        <div className="flex min-h-0 flex-1 bg-[#cfd0d2]">
          <Sidebar />
          <button type="button" aria-label="收起菜单" className="flex h-[46px] w-[6px] shrink-0 items-center self-center border border-[#bfc1c9]">
            <span className="h-[10px] w-[5px] bg-[#a5a6a8] [clip-path:polygon(100%_0,100%_100%,0_50%)]" />
          </button>
          <div className="flex min-w-0 flex-1 flex-col pb-[13px] pl-[5px] pr-3 pt-3">
            <ListPanel />
          </div>
        </div>
        <div className="h-[33px] shrink-0" />
        <Dialog />
      </main>
      <Taskbar />
    </div>
  );
}
